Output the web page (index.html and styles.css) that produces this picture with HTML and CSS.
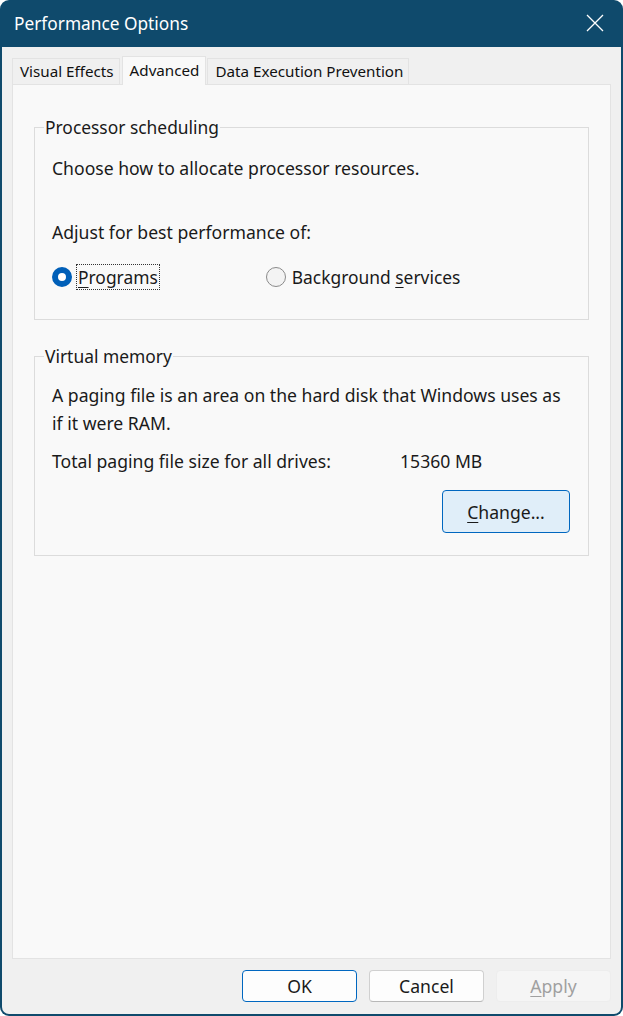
FILE: index.html
```html
<!DOCTYPE html>
<html lang="en">
<head>
    <meta charset="UTF-8">
    <meta name="viewport" content="width=device-width, initial-scale=1.0">
    <link rel="stylesheet" href="styles.css">
    <title>Performance Options</title>
</head>
<body>
  <div class="window">
    <div class="title-bar">
      <span class="title-text">Performance Options</span>
      <span class="close-btn">
        <svg width="18" height="18" viewBox="0 0 18 18"><path d="M1 1 L17 17 M17 1 L1 17" stroke="#fff" stroke-width="1.3" fill="none"/></svg>
      </span>
    </div>

    <div class="client">
      <div class="tabs">
        <div class="tab">Visual Effects</div>
        <div class="tab active">Advanced</div>
        <div class="tab">Data Execution Prevention</div>
      </div>

      <div class="tab-panel">
        <fieldset class="group">
          <legend>Processor scheduling</legend>
          <p class="line">Choose how to allocate processor resources.</p>
          <p class="line adjust">Adjust for best performance of:</p>
          <div class="radio-row">
            <label class="radio">
              <span class="dot checked"></span>
              <span class="radio-label focused"><u>P</u>rograms</span>
            </label>
            <label class="radio second">
              <span class="dot"></span>
              <span class="radio-label">Background <u>s</u>ervices</span>
            </label>
          </div>
        </fieldset>

        <fieldset class="group memory">
          <legend>Virtual memory</legend>
          <p class="line">A paging file is an area on the hard disk that Windows uses as if it were RAM.</p>
          <div class="size-row">
            <span class="size-label">Total paging file size for all drives:</span>
            <span class="size-value">15360 MB</span>
          </div>
          <div class="change-row">
            <button class="btn change"><u>C</u>hange...</button>
          </div>
        </fieldset>
      </div>

      <div class="bottom-bar">
        <button class="btn default">OK</button>
        <button class="btn">Cancel</button>
        <button class="btn disabled"><u>A</u>pply</button>
      </div>
    </div>
  </div>
</body>
</html>
```

FILE: styles.css
```css
body {
    margin: 0;
    padding: 0;
    background-color: #fff;
    font-family: "Noto Sans", "Open Sans", sans-serif;
    color: #1a1a1a;
}

/* window frame */
.window {
    width: 623px;
    height: 1016px;
    box-sizing: border-box;
    background-color: #0f4a6c;
    border-radius: 9px;
    padding: 0 2px 2px 2px;
    display: flex;
    flex-direction: column;
}

.title-bar {
    height: 47px;
    display: flex;
    align-items: center;
    justify-content: space-between;
    padding-left: 12px;
    padding-right: 17px;
    color: #fff;
}

.title-text {
    font-size: 17.3px;
    margin-top: -1px;
}

.close-btn {
    display: flex;
    margin-top: -2px;
}

.client {
    flex: 1;
    background-color: #f0f0f0;
    border-radius: 0 0 7px 7px;
    padding: 9px 10px 12px 10px;
    display: flex;
    flex-direction: column;
}

/* tabs */
.tabs {
    display: flex;
    align-items: flex-end;
    height: 28px;
    position: relative;
    z-index: 1;
}

.tab {
    height: 26px;
    line-height: 25px;
    font-size: 15.2px;
    padding: 0 5px 0 7px;
    background-color: #f0f0f0;
    border: 1px solid #e3e3e3;
    border-bottom: none;
    box-sizing: border-box;
    color: #111;
}

.tab.active {
    height: 29px;
    line-height: 26px;
    background-color: #f9f9f9;
    margin: 0 1px -1px 2px;
    padding: 0 6px 0 7px;
}

.tab-panel {
    flex: 1;
    background-color: #f9f9f9;
    border: 1px solid #e3e3e3;
    padding: 30px 21px 0 21px;
}

/* group boxes */
.group {
    margin: 0;
    border: 1px solid #dcdcdc;
    padding: 15px 17px 29px 17px;
}

.group legend {
    font-size: 17.4px;
    padding: 0 1px;
    margin-left: -8px;
    color: #1a1a1a;
}

.group.memory {
    margin-top: 24px;
    padding-top: 13px;
    padding-bottom: 22px;
}

.line {
    margin: 0;
    font-size: 17.6px;
    line-height: 28px;
}

.adjust {
    margin-top: 36px;
}

.radio-row {
    display: flex;
    align-items: center;
    margin-top: 18px;
    height: 26px;
}

.radio {
    display: flex;
    align-items: center;
    font-size: 17.4px;
}

.radio.second {
    margin-left: 106px;
}

.dot {
    width: 20px;
    height: 20px;
    border-radius: 50%;
    box-sizing: border-box;
    border: 1px solid #8a8a8a;
    background-color: #f3f3f3;
    margin-right: 4px;
}

.dot.checked {
    border: 6px solid #005fb8;
    background-color: #fff;
}

.radio-label {
    line-height: 24px;
    padding: 0 1px;
    border: 1px dotted transparent;
}

.radio-label.focused {
    border-color: #333;
}

.radio u, .btn u {
    text-decoration-thickness: 1px;
    text-underline-offset: 3px;
}

.size-row {
    display: flex;
    margin-top: 10px;
    font-size: 17.6px;
    line-height: 28px;
}

.size-label {
    width: 348px;
}

.change-row {
    display: flex;
    justify-content: flex-end;
    margin-top: 15px;
    padding-right: 1px;
}

/* buttons */
.btn {
    width: 115px;
    height: 32px;
    font-family: inherit;
    font-size: 17.6px;
    color: #1a1a1a;
    background-color: #fdfdfd;
    border: 1px solid #d0d0d0;
    border-bottom-color: #b8b8b8;
    border-radius: 4px;
    padding: 0;
}

.btn.change {
    width: 128px;
    height: 43px;
    background-color: #e0eef9;
    border: 1px solid #0067c0;
}

.btn.default {
    border: 1px solid #0067c0;
    background-color: #fdfdfd;
}

.btn.disabled {
    background-color: #f5f5f5;
    border-color: #ededed;
    color: #a0a0a0;
}

.bottom-bar {
    display: flex;
    justify-content: flex-end;
    gap: 12px;
    margin-top: 11px;
}
```
